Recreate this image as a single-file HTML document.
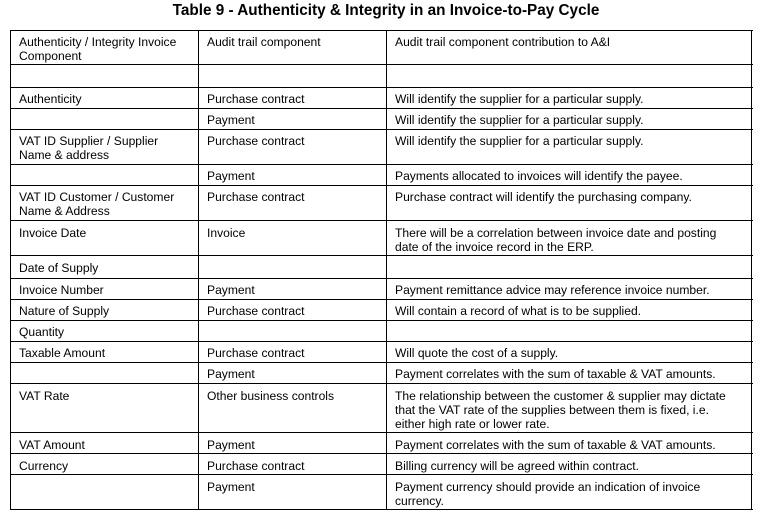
<!DOCTYPE html>
<html><head><style>
body{margin:0;background:#fff;width:762px;height:520px;position:relative;overflow:hidden;font-family:"Liberation Sans",Arial,sans-serif;color:#000}
.t{position:absolute;top:2px;left:0;width:772px;text-align:center;font-weight:bold;font-size:15.3px}
.h{position:absolute;left:10px;width:743px;height:1.3px;background:#000}
.v{position:absolute;top:30px;height:480px;width:1.3px;background:#000}
.c{position:absolute;font-size:12.1px;line-height:14px;white-space:nowrap;margin-top:1px}
</style></head><body>
<div class="t">Table 9 - Authenticity &amp; Integrity in an Invoice-to-Pay Cycle</div>
<div class="h" style="top:30px"></div>
<div class="h" style="top:64px"></div>
<div class="h" style="top:87px"></div>
<div class="h" style="top:108px"></div>
<div class="h" style="top:129px"></div>
<div class="h" style="top:164px"></div>
<div class="h" style="top:185px"></div>
<div class="h" style="top:220px"></div>
<div class="h" style="top:255px"></div>
<div class="h" style="top:278px"></div>
<div class="h" style="top:299px"></div>
<div class="h" style="top:320px"></div>
<div class="h" style="top:341px"></div>
<div class="h" style="top:362px"></div>
<div class="h" style="top:383px"></div>
<div class="h" style="top:432px"></div>
<div class="h" style="top:453px"></div>
<div class="h" style="top:474px"></div>
<div class="h" style="top:509px"></div>
<div class="v" style="left:10px"></div>
<div class="v" style="left:198px"></div>
<div class="v" style="left:386px"></div>
<div class="v" style="left:751px"></div>

<div class="c" style="left:19px;top:34px">Authenticity / Integrity Invoice<br>Component</div>
<div class="c" style="left:207px;top:34px">Audit trail component</div>
<div class="c" style="left:395px;top:34px">Audit trail component contribution to A&amp;I</div>

<div class="c" style="left:19px;top:91px">Authenticity</div>
<div class="c" style="left:207px;top:91px">Purchase contract</div>
<div class="c" style="left:395px;top:91px">Will identify the supplier for a particular supply.</div>

<div class="c" style="left:207px;top:112px">Payment</div>
<div class="c" style="left:395px;top:112px">Will identify the supplier for a particular supply.</div>

<div class="c" style="left:19px;top:133px">VAT ID Supplier / Supplier<br>Name &amp; address</div>
<div class="c" style="left:207px;top:133px">Purchase contract</div>
<div class="c" style="left:395px;top:133px">Will identify the supplier for a particular supply.</div>

<div class="c" style="left:207px;top:168px">Payment</div>
<div class="c" style="left:395px;top:168px">Payments allocated to invoices will identify the payee.</div>

<div class="c" style="left:19px;top:189px">VAT ID Customer / Customer<br>Name &amp; Address</div>
<div class="c" style="left:207px;top:189px">Purchase contract</div>
<div class="c" style="left:395px;top:189px">Purchase contract will identify the purchasing company.</div>

<div class="c" style="left:19px;top:225px">Invoice Date</div>
<div class="c" style="left:207px;top:225px">Invoice</div>
<div class="c" style="left:395px;top:225px">There will be a correlation between invoice date and posting<br>date of the invoice record in the ERP.</div>

<div class="c" style="left:19px;top:260px">Date of Supply</div>

<div class="c" style="left:19px;top:282px">Invoice Number</div>
<div class="c" style="left:207px;top:282px">Payment</div>
<div class="c" style="left:395px;top:282px">Payment remittance advice may reference invoice number.</div>

<div class="c" style="left:19px;top:303px">Nature of Supply</div>
<div class="c" style="left:207px;top:303px">Purchase contract</div>
<div class="c" style="left:395px;top:303px">Will contain a record of what is to be supplied.</div>

<div class="c" style="left:19px;top:324px">Quantity</div>

<div class="c" style="left:19px;top:345px">Taxable Amount</div>
<div class="c" style="left:207px;top:345px">Purchase contract</div>
<div class="c" style="left:395px;top:345px">Will quote the cost of a supply.</div>

<div class="c" style="left:207px;top:366px">Payment</div>
<div class="c" style="left:395px;top:366px">Payment correlates with the sum of taxable &amp; VAT amounts.</div>

<div class="c" style="left:19px;top:388px">VAT Rate</div>
<div class="c" style="left:207px;top:388px">Other business controls</div>
<div class="c" style="left:395px;top:388px">The relationship between the customer &amp; supplier may dictate<br>that the VAT rate of the supplies between them is fixed, i.e.<br>either high rate or lower rate.</div>

<div class="c" style="left:19px;top:437px">VAT Amount</div>
<div class="c" style="left:207px;top:437px">Payment</div>
<div class="c" style="left:395px;top:437px">Payment correlates with the sum of taxable &amp; VAT amounts.</div>

<div class="c" style="left:19px;top:458px">Currency</div>
<div class="c" style="left:207px;top:458px">Purchase contract</div>
<div class="c" style="left:395px;top:458px">Billing currency will be agreed within contract.</div>

<div class="c" style="left:207px;top:479px">Payment</div>
<div class="c" style="left:395px;top:479px">Payment currency should provide an indication of invoice<br>currency.</div>
</body></html>
